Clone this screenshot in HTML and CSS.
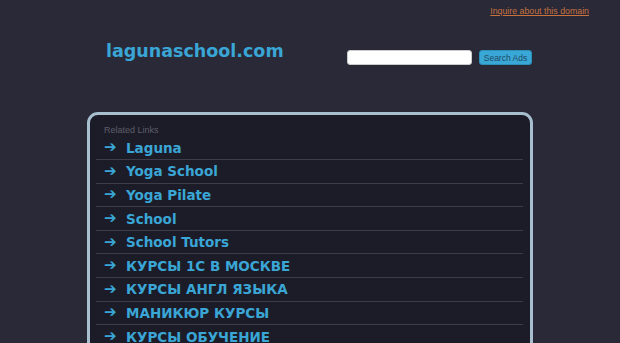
FILE: index.html
```html
<!DOCTYPE html>
<html lang="en">
<head>
    <meta charset="UTF-8">
    <title>lagunaschool.com</title>
    <link rel="stylesheet" href="styles.css">
</head>
<body>
<div class="topbar">
    <a class="inquire" href="#">Inquire about this domain</a>
</div>

<header class="header">
    <h1 class="domain">lagunaschool.com</h1>
    <form class="search">
        <input type="text" class="search-input">
        <button type="button" class="search-btn">Search Ads</button>
    </form>
</header>

<!-- Lista de links relacionados -->
<div class="panel">
    <div class="panel-title">Related Links</div>
    <ul class="links">
        <li><a href="#"><span class="arrow">&#10132;</span>Laguna</a></li>
        <li><a href="#"><span class="arrow">&#10132;</span>Yoga School</a></li>
        <li><a href="#"><span class="arrow">&#10132;</span>Yoga Pilate</a></li>
        <li><a href="#"><span class="arrow">&#10132;</span>School</a></li>
        <li><a href="#"><span class="arrow">&#10132;</span>School Tutors</a></li>
        <li><a href="#"><span class="arrow">&#10132;</span>КУРСЫ 1С В МОСКВЕ</a></li>
        <li><a href="#"><span class="arrow">&#10132;</span>КУРСЫ АНГЛ ЯЗЫКА</a></li>
        <li><a href="#"><span class="arrow">&#10132;</span>МАНИКЮР КУРСЫ</a></li>
        <li><a href="#"><span class="arrow">&#10132;</span>КУРСЫ ОБУЧЕНИЕ</a></li>
    </ul>
</div>
</body>
</html>
```

FILE: styles.css
```css
body {
    margin: 0;
    padding: 0;
    background-color: #292938;
    font-family: "DejaVu Sans", sans-serif;
    overflow: hidden;
}

.topbar {
    display: flex;
    justify-content: flex-end;
    padding: 6px 31px 0 0;
    height: 14px;
}

.inquire {
    font-family: "Liberation Sans", Arial, sans-serif;
    font-size: 8.8px;
    color: #c8723e;
    text-decoration: underline;
}

.header {
    width: 446px;
    margin: 0 auto;
    display: flex;
    justify-content: space-between;
    align-items: flex-start;
    padding-top: 20px;
    height: 72px;
}

.domain {
    margin: 0 0 0 19px;
    font-size: 17.5px;
    font-weight: bold;
    color: #3aa6d6;
    line-height: 22px;
}

.search {
    display: flex;
    gap: 7px;
    margin: 10px 1px 0 0;
}

.search-input {
    width: 125px;
    height: 15px;
    padding: 0;
    border: 1px solid #ccc;
    border-radius: 3px;
    background: #fff;
    box-sizing: border-box;
}

.search-btn {
    height: 15px;
    width: 53px;
    padding: 0;
    border: 1px solid #2b8fb8;
    border-radius: 3px;
    background: #3aa8d6;
    color: #1f4a66;
    font-family: "Liberation Sans", Arial, sans-serif;
    font-size: 8.5px;
    box-sizing: border-box;
}

.panel {
    box-sizing: border-box;
    width: 446px;
    margin: 0 auto;
    background: #1c1c28;
    border: 3px solid #a8bfcf;
    border-radius: 11px;
    padding: 10px 7px 20px 6px;
}

.panel-title {
    font-family: "Liberation Sans", Arial, sans-serif;
    font-size: 9px;
    color: #5c5c68;
    padding-left: 8px;
    height: 11.5px;
}

.links {
    list-style: none;
    margin: 0;
    padding: 0;
}

.links li {
    border-bottom: 1px solid #3c3c4a;
    height: 22.6px;
}

.links li a {
    display: flex;
    align-items: center;
    height: 100%;
    padding-left: 8px;
    text-decoration: none;
    color: #3aa6d6;
    font-weight: bold;
    font-size: 13.5px;
}

.arrow {
    width: 22px;
    font-size: 15px;
    line-height: 1;
    font-weight: normal;
}
```
